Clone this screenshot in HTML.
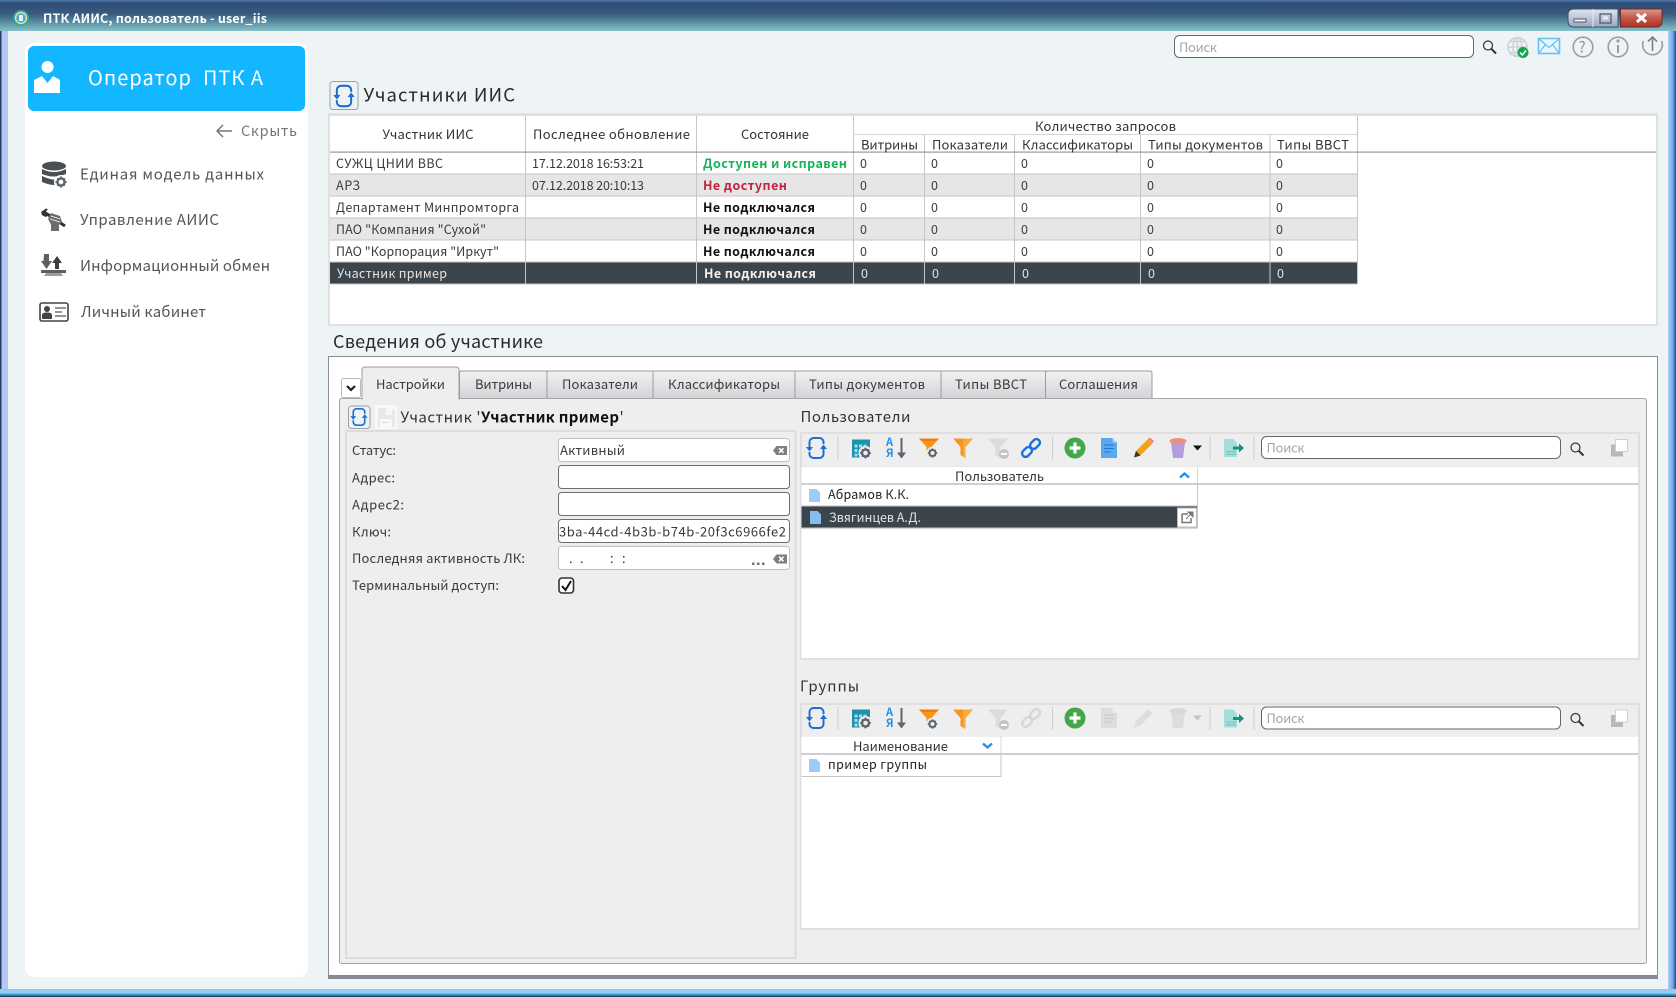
<!DOCTYPE html>
<html lang="ru"><head><meta charset="utf-8"><title>ПТК АИИС</title>
<style>
html,body{margin:0;padding:0;width:1676px;height:997px;overflow:hidden;background:#eef3f6}
svg{display:block;position:absolute;left:0;top:0}
text{font-family:"Noto Sans CJK SC","Liberation Sans",sans-serif;fill:#333;font-size:12.5px;white-space:pre}
.b{font-weight:700}
.h{font-size:13px;fill:#333}
.r{font-size:12.5px;fill:#3a3a3a}
.w{fill:#e4e4e4}
.m{font-size:15px;fill:#555}
.l{font-size:13px;fill:#3a3a3a}
.s{font-size:15px;fill:#333}
.p{font-size:13px;fill:#a5a5a5}
</style></head><body>
<svg width="1676" height="997" viewBox="0 0 1676 997" xmlns="http://www.w3.org/2000/svg">
<defs>
<linearGradient id="tb" x1="0" y1="0" x2="0" y2="1"><stop offset="0" stop-color="#4f78ad"/><stop offset=".1" stop-color="#2f4d75"/><stop offset=".45" stop-color="#385a80"/><stop offset=".75" stop-color="#5f95a6"/><stop offset="1" stop-color="#86bfc8"/></linearGradient>
<linearGradient id="tab" x1="0" y1="0" x2="0" y2="1"><stop offset="0" stop-color="#f2f2f4"/><stop offset="1" stop-color="#d2d3d6"/></linearGradient>
<linearGradient id="wb" x1="0" y1="0" x2="0" y2="1"><stop offset="0" stop-color="#dfe4ee"/><stop offset=".5" stop-color="#bcc5d8"/><stop offset="1" stop-color="#9aa8c2"/></linearGradient>
<linearGradient id="cb" x1="0" y1="0" x2="0" y2="1"><stop offset="0" stop-color="#dd9a8c"/><stop offset=".5" stop-color="#c4584a"/><stop offset="1" stop-color="#b03022"/></linearGradient>
<linearGradient id="rb" x1="0" y1="0" x2="1" y2="0"><stop offset="0" stop-color="#b8cdf2"/><stop offset=".6" stop-color="#6aa9ec"/><stop offset="1" stop-color="#1c4c80"/></linearGradient>
<linearGradient id="bb" x1="0" y1="0" x2="0" y2="1"><stop offset="0" stop-color="#a4bfe6"/><stop offset=".45" stop-color="#8ad8f6"/><stop offset=".75" stop-color="#3d8cbc"/><stop offset="1" stop-color="#0a3553"/></linearGradient>

<g id="refresh" fill="none" stroke="#1f6fd1" stroke-width="2">
<path d="M-7 -1V-6A4 4 0 0 1 -3 -10H3A4 4 0 0 1 7 -6V-4"/>
<path d="M7 1V6A4 4 0 0 1 3 10H-3A4 4 0 0 1 -7 6V4"/>
<path d="M-10.5 -1H-3.5L-7 3.5Z" fill="#1f6fd1" stroke="none"/>
<path d="M10.5 1H3.5L7 -3.5Z" fill="#1f6fd1" stroke="none"/>
</g>
<g id="gear">
<circle r="4.2" fill="none" stroke="#5b6670" stroke-width="2.8"/>
<path d="M-1.2 -6.5h2.4v2.2h-2.4zM-1.2 4.3h2.4v2.2h-2.4zM-6.5 -1.2h2.2v2.4h-2.2zM4.3 -1.2h2.2v2.4h-2.2z" fill="#5b6670"/>
<path d="M-5.2 -3.6l1.6 -1.6l1.6 1.6l-1.6 1.6zM3.6 -5.2l1.6 1.6l-1.6 1.6l-1.6 -1.6zM-3.6 5.2l-1.6 -1.6l1.6 -1.6l1.6 1.6zM5.2 3.6l-1.6 1.6l-1.6 -1.6l1.6 -1.6z" fill="#5b6670"/>
</g>
<g id="tablegear">
<rect x="-9.5" y="-9.5" width="18" height="18" fill="#1d91ad"/>
<path d="M-7 -4.5h3v3h-3zM-2.5 -4.5h3v3h-3zM2 -4.5h3v3h-3zM-7 0h3v3h-3zM-2.5 0h3v3h-3zM-7 4.5h3v3h-3zM-2.5 4.5h3v3h-3z" fill="#a7dce8"/>
<circle cx="4" cy="4" r="7" fill="#eee"/>
<use href="#gear" transform="translate(4 4) scale(.82)"/>
</g>
<path id="funnel" d="M-10 -9.5H10L2.5 -1V10L-2.5 7V-1Z"/>
<g id="az">
<text x="-10" y="-2" style="font-size:11px;font-weight:700;fill:#1e90f0">А</text>
<text x="-10" y="9" style="font-size:11px;font-weight:700;fill:#1e90f0">Я</text>
<path d="M5.5 -10V7" stroke="#5b6670" stroke-width="2" fill="none"/><path d="M1 4.5H10L5.5 10.5Z" fill="#5b6670"/>
</g>
<g id="filtgear"><use href="#funnel" fill="#f7941d"/><path d="M-10 -9.5H10L7.5 -7H-7.5Z" fill="#ea7f0c"/><circle cx="3.5" cy="5" r="6.2" fill="#eee"/><use href="#gear" transform="translate(3.5 5) scale(.72)"/></g>
<g id="filt"><use href="#funnel" fill="#f7941d"/><path d="M0 -9.5H10L2.5 -1V10L0 8.5Z" fill="#f9a93d"/></g>
<g id="filtminus"><use href="#funnel" fill="#dcdcdc"/><circle cx="6" cy="6" r="5" fill="#c4c4c4"/><rect x="3" y="5" width="6" height="2" fill="#fff"/></g>
<g id="link" fill="none" stroke-width="2.4"><rect x="-9.5" y="0.500" width="11" height="7" rx="3.500" transform="rotate(-45 -4 4)"/><rect x="-1.500" y="-7.500" width="11" height="7" rx="3.500" transform="rotate(-45 4 -4)"/></g>
<g id="add"><circle r="10.5" fill="#43a649"/><path d="M-5.5 -1.6H-1.6V-5.5H1.6V-1.6H5.5V1.6H1.6V5.5H-1.6V1.6H-5.5Z" fill="#fff"/></g>
<g id="bigdoc"><path d="M-8 -10H3.5L8 -5.5V10H-8Z"/><path d="M3.5 -10V-5.5H8Z" fill="#fff" opacity=".45"/></g>
<path id="smdoc" d="M-5.5 -6.5H2L5.5 -3V6.5H-5.5Z"/>
<g id="mag" fill="none" stroke="#333"><circle cx="-1.5" cy="-1.5" r="4.5" stroke-width="1.2"/><path d="M2 2L6.5 6.5" stroke-width="2"/></g>
<g id="export"><path d="M-9 -9H0L4 -5V9H-9Z" fill="#a4dfd7"/><path d="M-7 3h10v1.200h-10zM-7 5.800h10v1.200h-10z" fill="#7fc7bd"/><path d="M0 -1.500H6V-4.500L11 0L6 4.500V1.500H0Z" fill="#0f9384"/></g>
<g id="copy"><rect x="-8" y="-3.5" width="12" height="12" fill="#b8b8b8"/><rect x="-3.5" y="-8.5" width="12" height="12" fill="#fff" stroke="#cfcfcf"/></g>
<g id="clr"><path d="M-7 0L-3.5 -4.5H7V4.5H-3.5Z" fill="#7a7f84"/><path d="M-1 -2.3L3.5 2.3M3.5 -2.3L-1 2.3" stroke="#fff" stroke-width="1.5"/></g>
</defs>

<!-- window chrome -->
<rect x="0" y="0" width="1676" height="997" fill="#eef3f6"/>
<rect x="0" y="0" width="1676" height="31" fill="url(#tb)"/>
<rect x="0" y="31" width="1.5" height="966" fill="#23406a"/>
<rect x="1.5" y="31" width="6.5" height="960" fill="#b8c4f2"/>
<rect x="1668" y="31" width="8" height="966" fill="url(#rb)"/>
<rect x="0" y="989" width="1676" height="8" fill="url(#bb)"/>
<circle cx="21" cy="18" r="8" fill="#2aa6a0"/><circle cx="21" cy="18" r="6.200" fill="#e9e28a"/><circle cx="21" cy="18" r="4.800" fill="#4aa8de"/><rect x="19" y="15" width="4" height="6" fill="#e8f2f8"/>
<text x="43" y="23" textLength="224" class="b" style="font-size:12.5px;fill:#fff">ПТК АИИС, пользователь - user_iis</text>
<!-- window buttons -->
<path d="M1574 9H1618V27H1574Q1568 27 1568 21V15Q1568 9 1574 9Z" fill="url(#wb)" stroke="#3c4f6e"/>
<path d="M1593 9V27" stroke="#e4e8f0"/>
<rect x="1574" y="19" width="12" height="3" fill="#f3f5f8" stroke="#556"/>
<rect x="1600" y="14" width="11" height="9" fill="none" stroke="#4a5670" stroke-width="1.200"/><rect x="1603" y="16.500" width="5" height="3" fill="#e8ebf2"/>
<path d="M1620.5 9H1662V21Q1662 27 1656 27H1620.5Z" fill="url(#cb)" stroke="#6e2a22"/>
<path d="M1637 14L1646 22M1646 14L1637 22" stroke="#fff" stroke-width="3"/>

<!-- sidebar -->
<rect x="25" y="43" width="283" height="934" rx="9" fill="#fff"/>
<rect x="28" y="46" width="277" height="65" rx="6" fill="#12b7ff"/>
<circle cx="47.5" cy="67" r="6" fill="#fff"/>
<path d="M34 80L42 76L47.5 83L53 76L60 80V93H34Z" fill="#fff"/>
<text x="88" y="85" textLength="175" style="font-size:20px;fill:#fff">Оператор  ПТК А</text>
<path d="M232 131H217M223 125L217 131L223 137" fill="none" stroke="#777" stroke-width="1.5"/>
<text x="241" y="136" textLength="56" style="font-size:14.5px;fill:#777">Скрыть</text>
<g fill="#4b4f53">
<ellipse cx="54" cy="166" rx="12" ry="4.5"/><path d="M42 169Q54 175 66 169V174Q54 179 42 174ZM42 176Q54 182 62 178V184Q54 187 42 182Z"/>
</g>
<circle cx="61" cy="182" r="7" fill="#fff"/><use href="#gear" transform="translate(61 182) scale(.85)"/>
<text x="80" y="179.500" textLength="184" class="m">Единая модель данных</text>
<path d="M44 212L65 226" stroke="#333" stroke-width="3"/>
<path d="M41 212L46 208.500L48 209.500L45 212L47 214.500L49 213L49.500 215L45.500 217L42 215Z" fill="#333"/>
<path d="M51 213L60 216L62 222L59 224.500V231H51V224.500L48 219Z" fill="#6a6c6e"/>
<path d="M51 216L60 219M50 219L60 222" stroke="#fff" stroke-width=".8"/>
<text x="80" y="225" textLength="139" class="m">Управление АИИС</text>
<path d="M44 254h5v7h3l-5.500 8l-5.500-8h2.500z" fill="#5d6063"/>
<path d="M57 256l5 7h-3v6h-4v-6h-3z" fill="#3d4043"/>
<rect x="41" y="270" width="25" height="3" fill="#5d6063"/><path d="M46 273h15l2 3h-19z" fill="#9a9c9e"/>
<text x="80" y="271" textLength="190" class="m">Информационный обмен</text>
<rect x="40" y="303" width="28" height="18" rx="2" fill="#fff" stroke="#444" stroke-width="1.6"/>
<circle cx="47" cy="309" r="3" fill="#444"/><path d="M42 319V315Q42 312.500 47 312.500Q52 312.500 52 315V319Z" fill="#444"/>
<path d="M55 308H66M55 312H62M55 316H66" stroke="#555" stroke-width="1.3"/>
<text x="81" y="317" textLength="125" class="m">Личный кабинет</text>

<!-- top toolbar -->
<rect x="1174.500" y="35.500" width="299" height="22" rx="5" fill="#fff" stroke="#666"/>
<text x="1179" y="52" textLength="38" class="p">Поиск</text>
<use href="#mag" transform="translate(1489.500 47)"/>
<g fill="none" stroke="#ccd2d8" stroke-width="1.5"><circle cx="1517.500" cy="47" r="9.500"/><ellipse cx="1517.500" cy="47" rx="4.500" ry="9.500"/><path d="M1508 47H1527M1509.500 41.500H1525.500M1509.500 52.500H1525.500M1517.500 37.500V56.500"/></g>
<circle cx="1523" cy="52.500" r="5.500" fill="#10a84f"/><path d="M1520 52.500L1522.300 55L1526 50.500" fill="none" stroke="#fff" stroke-width="1.5"/>
<rect x="1538.500" y="38.500" width="21" height="15" fill="#eaf6fe" stroke="#69c3f2" stroke-width="1.6"/><path d="M1538.500 38.500L1549 47.500L1559.500 38.500M1538.500 53.500L1545.500 44.500M1559.500 53.500L1552.500 44.500" fill="none" stroke="#69c3f2" stroke-width="1.4"/>
<g fill="none" stroke="#9a9ea3" stroke-width="1.6">
<circle cx="1583" cy="47" r="9.800"/><circle cx="1618" cy="47" r="9.800"/>
<path d="M1643.500 41A9.800 9.800 0 1 0 1661.500 41"/>
<path d="M1652.500 51V37M1648 41.500L1652.500 37L1657 41.500" stroke="#7d8186"/>
<path d="M1618 45V53" stroke-width="2"/><circle cx="1618" cy="41" r=".8"/>
</g>
<text x="1578.500" y="52.500" style="font-size:15px;fill:#8d9196">?</text>

<!-- top section -->
<rect x="330" y="81.500" width="28" height="28" rx="3" fill="#eef3f6" stroke="#9aa0a6"/>
<use href="#refresh" transform="translate(344 96) scale(1.02)"/>
<text x="363.500" y="101.500" textLength="151.500" style="font-size:18.500px;fill:#2a2a2a">Участники ИИС</text>

<rect x="328" y="113" width="1330" height="213" fill="#dfe1e1"/>
<rect x="330" y="116" width="1326" height="208" fill="#fff"/>
<!-- rows -->
<rect x="330" y="174" width="1027" height="22" fill="#e6e6e6"/>
<rect x="330" y="218" width="1027" height="22" fill="#e6e6e6"/>
<rect x="330" y="262" width="1027" height="22" fill="#3c444c"/>
<g fill="#c6c6c6">
<rect x="330" y="173.500" width="1027" height="1"/><rect x="330" y="195.500" width="1027" height="1"/><rect x="330" y="217.500" width="1027" height="1"/><rect x="330" y="239.500" width="1027" height="1"/><rect x="330" y="261.500" width="1027" height="1"/><rect x="330" y="283.500" width="1027" height="1"/>
<rect x="525" y="116" width="1" height="168"/><rect x="696" y="116" width="1" height="168"/><rect x="853" y="116" width="1" height="168"/><rect x="924" y="134" width="1" height="150"/><rect x="1014" y="134" width="1" height="150"/><rect x="1140" y="134" width="1" height="150"/><rect x="1269.500" y="134" width="1" height="150"/><rect x="1357" y="116" width="1" height="168"/>
<rect x="853" y="134" width="504" height="1" fill="#d6d6d6"/>
</g>
<rect x="330" y="151.500" width="1326" height="1.200" fill="#9a9a9a"/>
<text x="382.500" y="139" textLength="91" class="h">Участник ИИС</text>
<text x="533" y="139" textLength="157" class="h">Последнее обновление</text>
<text x="741" y="139" textLength="68" class="h">Состояние</text>
<text x="1035" y="131" textLength="141" class="h">Количество запросов</text>
<text x="861" y="149.500" textLength="57" class="h">Витрины</text>
<text x="932" y="149.500" textLength="76" class="h">Показатели</text>
<text x="1022" y="149.500" textLength="111" class="h">Классификаторы</text>
<text x="1148" y="149.500" textLength="115" class="h">Типы документов</text>
<text x="1277" y="149.500" textLength="72" class="h">Типы ВВСТ</text>
<g class="r">
<text x="336" y="168" textLength="107" class="r">СУЖЦ ЦНИИ ВВС</text>
<text x="336" y="190" textLength="24" class="r">АРЗ</text>
<text x="336" y="212" textLength="183" class="r">Департамент Минпромторга</text>
<text x="336" y="234" textLength="150" class="r">ПАО "Компания "Сухой"</text>
<text x="336" y="256" textLength="163" class="r">ПАО "Корпорация "Иркут"</text>
<text x="337" y="278" textLength="110" class="r w">Участник пример</text>
<text x="532" y="168" textLength="112" class="r">17.12.2018 16:53:21</text>
<text x="532" y="190" textLength="112" class="r">07.12.2018 20:10:13</text>
<text x="703" y="168" textLength="144" class="r b" style="fill:#16b25a">Доступен и исправен</text>
<text x="703" y="190" textLength="84" class="r b" style="fill:#c4233f">Не доступен</text>
<text x="703" y="212" textLength="112" class="r b" style="fill:#111">Не подключался</text>
<text x="703" y="234" textLength="112" class="r b" style="fill:#111">Не подключался</text>
<text x="703" y="256" textLength="112" class="r b" style="fill:#111">Не подключался</text>
<text x="704" y="278" textLength="112" class="r b" style="fill:#f2f2f2">Не подключался</text>
</g>
<g>
<text x="860" y="168" class="r">0</text><text x="931" y="168" class="r">0</text><text x="1021" y="168" class="r">0</text><text x="1147" y="168" class="r">0</text><text x="1276" y="168" class="r">0</text>
<text x="860" y="190" class="r">0</text><text x="931" y="190" class="r">0</text><text x="1021" y="190" class="r">0</text><text x="1147" y="190" class="r">0</text><text x="1276" y="190" class="r">0</text>
<text x="860" y="212" class="r">0</text><text x="931" y="212" class="r">0</text><text x="1021" y="212" class="r">0</text><text x="1147" y="212" class="r">0</text><text x="1276" y="212" class="r">0</text>
<text x="860" y="234" class="r">0</text><text x="931" y="234" class="r">0</text><text x="1021" y="234" class="r">0</text><text x="1147" y="234" class="r">0</text><text x="1276" y="234" class="r">0</text>
<text x="860" y="256" class="r">0</text><text x="931" y="256" class="r">0</text><text x="1021" y="256" class="r">0</text><text x="1147" y="256" class="r">0</text><text x="1276" y="256" class="r">0</text>
<text x="861" y="278" class="r w">0</text><text x="932" y="278" class="r w">0</text><text x="1022" y="278" class="r w">0</text><text x="1148" y="278" class="r w">0</text><text x="1277" y="278" class="r w">0</text>
</g>

<!-- details section -->
<text x="333" y="348" textLength="210" style="font-size:18px;fill:#2a2a2a">Сведения об участнике</text>
<rect x="328.500" y="356.500" width="1329" height="622" fill="#fff" stroke="#8a8d92"/>
<rect x="328" y="975" width="1330" height="4" fill="#868a94"/>

<!-- tabs -->
<rect x="341.500" y="378.500" width="19" height="19" rx="2" fill="#fff" stroke="#bbb"/>
<path d="M347 386L351 390L355 386" fill="none" stroke="#222" stroke-width="2.200"/>
<g fill="url(#tab)" stroke="#9c9c9c">
<path d="M459.500 399V373Q459.500 371 461.500 371H545Q547 371 547 373V399Z"/>
<path d="M547 399V371H653V399Z"/>
<path d="M653 399V371H795V399Z"/>
<path d="M795 399V371H941V399Z"/>
<path d="M941 399V371H1045.500V399Z"/>
<path d="M1045.500 399V373Q1045.500 371 1047.500 371H1150Q1152 371 1152 373V399Z"/>
</g>
<!-- tab panel -->
<rect x="339.500" y="398.500" width="1307" height="565" rx="2" fill="#eeeeee" stroke="#a5a5a5"/>
<path d="M362 399V370Q362 367 365 367H456Q459 367 459 370V399Z" fill="#eeeeee" stroke="#9c9c9c"/>
<rect x="362.500" y="396" width="96" height="4" fill="#eeeeee"/>
<text x="376" y="389" textLength="69" class="l">Настройки</text>
<text x="475" y="389" textLength="57" class="l">Витрины</text>
<text x="562" y="389" textLength="76" class="l">Показатели</text>
<text x="668" y="389" textLength="112" class="l">Классификаторы</text>
<text x="809" y="389" textLength="116" class="l">Типы документов</text>
<text x="955" y="389" textLength="72" class="l">Типы ВВСТ</text>
<text x="1059" y="389" textLength="79" class="l">Соглашения</text>

<!-- left form -->
<rect x="348.500" y="406" width="21.500" height="22.500" rx="3" fill="#eef3f6" stroke="#9aa0a6"/>
<use href="#refresh" transform="translate(359 417) scale(.82)"/>
<rect x="375" y="405" width="22" height="24" fill="#f8f8f8"/>
<path d="M378 408H386V415H392V408L395 411V427H378Z" fill="#e9e9e9"/><rect x="380" y="419" width="12" height="8" fill="#f8f8f8"/><rect x="382" y="422" width="6" height="1" fill="#ddd"/>
<text x="400.500" y="422.500" textLength="80" class="s">Участник '</text>
<text x="481" y="422.500" textLength="138" class="s b" style="fill:#111">Участник пример</text>
<text x="619.500" y="422.500" class="s">'</text>
<rect x="346" y="431" width="449.500" height="527" fill="#eeeeee" stroke="#dcdcdc" stroke-width="2"/>
<text x="352" y="455" textLength="44" class="l">Статус:</text>
<text x="352" y="482.500" textLength="43" class="l">Адрес:</text>
<text x="352" y="509.500" textLength="52" class="l">Адрес2:</text>
<text x="352" y="536.500" textLength="39" class="l">Ключ:</text>
<text x="352" y="563" textLength="173" class="l">Последняя активность ЛК:</text>
<text x="352" y="590" textLength="147" class="l">Терминальный доступ:</text>
<g fill="#fff">
<rect x="558.500" y="438.500" width="231" height="23" rx="3" stroke="#c0c0c0"/>
<rect x="558.500" y="465.500" width="231" height="23" rx="3" stroke="#6e6e6e"/>
<rect x="558.500" y="492.500" width="231" height="23" rx="3" stroke="#6e6e6e"/>
<rect x="558.500" y="519.500" width="231" height="23" rx="3" stroke="#6e6e6e"/>
<rect x="558.500" y="546.500" width="231" height="23" rx="3" stroke="#c0c0c0"/>
</g>
<text x="560" y="455" textLength="65" class="l">Активный</text>
<text x="559" y="536.500" textLength="227" class="l">3ba-44cd-4b3b-b74b-20f3c6966fe2</text>
<use href="#clr" transform="translate(780 450.500)"/>
<use href="#clr" transform="translate(780 559)"/>
<path d="M752 562.500h2.500v2.500h-2.500zM757 562.500h2.500v2.500h-2.500zM762 562.500h2.500v2.500h-2.500z" fill="#777"/>
<path d="M570 561.500h1.500v1.500h-1.500zM581 561.500h1.500v1.500h-1.500zM611 561.500h1.500v1.500h-1.500zM611 556h1.500v1.500h-1.500zM623 561.500h1.500v1.500h-1.500zM623 556h1.500v1.500h-1.500z" fill="#333"/>
<rect x="559" y="578" width="14.500" height="15" rx="3" fill="#fff" stroke="#333" stroke-width="1.600"/>
<path d="M562 586L565.500 590L571 581" fill="none" stroke="#111" stroke-width="2"/>

<!-- users panel -->
<text x="800.500" y="422" textLength="110" class="s">Пользователи</text>
<rect x="800" y="432" width="840" height="228" fill="#dfdfdf"/>
<rect x="802" y="434" width="836" height="32.500" fill="#eeeeee"/>
<rect x="801.500" y="467" width="836.500" height="191" fill="#fff"/>
<rect x="801.500" y="483.500" width="836.500" height="1" fill="#9e9e9e"/>
<rect x="1197" y="467" width="1" height="16" fill="#d8d8d8"/>
<rect x="801.500" y="505.500" width="395.500" height="1" fill="#c6c6c6"/>
<rect x="801.500" y="506.500" width="395.500" height="22" fill="#3c444c"/>
<rect x="801.500" y="527.500" width="396" height="1.200" fill="#c6c6c6"/>
<rect x="1197" y="484" width="1" height="44" fill="#c6c6c6"/>
<text x="955" y="481" textLength="89" class="h">Пользователь</text>
<path d="M1180 477.500L1184.500 473.500L1189 477.500" fill="none" stroke="#1b8cf0" stroke-width="2.200"/>
<use href="#smdoc" transform="translate(814.500 495.500)" fill="#9ccdf9"/>
<text x="828" y="499" textLength="81" class="r" style="fill:#222">Абрамов К.К.</text>
<use href="#smdoc" transform="translate(815.500 517.500)" fill="#87bdee"/>
<text x="829" y="522" textLength="92" class="r w">Звягинцев А.Д.</text>
<rect x="1177.500" y="508" width="19" height="19" fill="#fff" stroke="#bbb"/>
<path d="M1182 514H1188M1182 514V522.500H1191V518" fill="none" stroke="#777" stroke-width="1.500"/><path d="M1186 519L1191 514M1188 512H1193V517Z" fill="#777" stroke="#777"/>

<g id="tb1">
<use href="#refresh" transform="translate(816.500 448)"/>
<path d="M838 437V460M1052.500 437V460M1210 437V460M1254 437V460" stroke="#cfcfcf"/>
<use href="#tablegear" transform="translate(861.500 449)"/>
<use href="#az" transform="translate(896 448)"/>
<use href="#filtgear" transform="translate(929 448)"/>
<use href="#filt" transform="translate(963 448)"/>
<use href="#filtminus" transform="translate(998 448)"/>
<use href="#link" transform="translate(1031 448)" stroke="#1a73d9"/>
<use href="#add" transform="translate(1075 448)"/>
<use href="#bigdoc" transform="translate(1109 448)" fill="#5aa9ef"/>
<path d="M1104 445H1114M1104 448.500H1114M1104 452H1111" stroke="#2176c9" stroke-width="1.100"/>
<path d="M1134 457.500L1136 451L1148 439L1152.500 443.500L1140.500 455.500Z" fill="#f7a01d"/><path d="M1148 439L1150 437.500L1154 441L1152.500 443.500Z" fill="#ef8a7d"/><path d="M1134 457.500L1136 451L1140.500 455.500Z" fill="#333"/>
<path d="M1171 442H1185L1183 458H1173Z" fill="#b39ddb"/><ellipse cx="1178" cy="441" rx="8.500" ry="3" fill="#ef8d7e"/>
<path d="M1193 445.500H1202L1197.500 450.500Z" fill="#111"/>
</g>
<use href="#export" transform="translate(1233 448)"/>
<rect x="1261.500" y="436.500" width="299" height="22" rx="5" fill="#fff" stroke="#666"/>
<text x="1266.500" y="452.500" textLength="38" class="p">Поиск</text>
<use href="#mag" transform="translate(1577 449)"/>
<use href="#copy" transform="translate(1619 448)"/>

<!-- groups panel -->
<text x="800" y="691.500" textLength="59" class="s">Группы</text>
<rect x="800" y="703" width="840" height="227" fill="#dfdfdf"/>
<rect x="802" y="705" width="836" height="31" fill="#eeeeee"/>
<rect x="801.500" y="736.500" width="836.500" height="191.500" fill="#fff"/>
<rect x="801.500" y="753.500" width="836.500" height="1" fill="#9e9e9e"/>
<rect x="1000.500" y="736.500" width="1" height="17" fill="#d8d8d8"/>
<text x="853" y="751" textLength="95" class="h">Наименование</text>
<path d="M983 743.500L987.500 747.500L992 743.500" fill="none" stroke="#1b8cf0" stroke-width="2.200"/>
<rect x="1000.500" y="754" width="1" height="23" fill="#c6c6c6"/>
<rect x="801.500" y="776" width="199" height="1" fill="#c6c6c6"/>
<use href="#smdoc" transform="translate(814.500 765.500)" fill="#9ccdf9"/>
<text x="828" y="769" textLength="99" class="r" style="fill:#222">пример группы</text>

<use href="#refresh" transform="translate(816.500 718)"/>
<path d="M838 707V730M1052.500 707V730M1210 707V730M1254 707V730" stroke="#cfcfcf"/>
<use href="#tablegear" transform="translate(861.500 719)"/>
<use href="#az" transform="translate(896 718)"/>
<use href="#filtgear" transform="translate(929 719)"/>
<use href="#filt" transform="translate(963 719)"/>
<use href="#filtminus" transform="translate(998 719)"/>
<use href="#link" transform="translate(1031 718)" stroke="#d6d6d6"/>
<use href="#add" transform="translate(1075 718)"/>
<use href="#bigdoc" transform="translate(1109 718)" fill="#dddddd"/>
<path d="M1104 715H1114M1104 718.500H1114M1104 722H1111" stroke="#c8c8c8" stroke-width="1.100"/>
<path d="M1134 727.500L1136 721L1148 709L1152.500 713.500L1140.500 725.500Z" fill="#dddddd"/>
<path d="M1171 712H1185L1183 728H1173Z" fill="#dddddd"/><ellipse cx="1178" cy="711" rx="8.500" ry="3" fill="#d8d8d8"/>
<path d="M1193 715.500H1202L1197.500 720.500Z" fill="#c4c4c4"/>
<use href="#export" transform="translate(1233 718.500)"/>
<rect x="1261.500" y="707" width="299" height="22" rx="5" fill="#fff" stroke="#666"/>
<text x="1266.500" y="723" textLength="38" class="p">Поиск</text>
<use href="#mag" transform="translate(1577 719.500)"/>
<use href="#copy" transform="translate(1619 718.500)"/>
</svg>
</body></html>
